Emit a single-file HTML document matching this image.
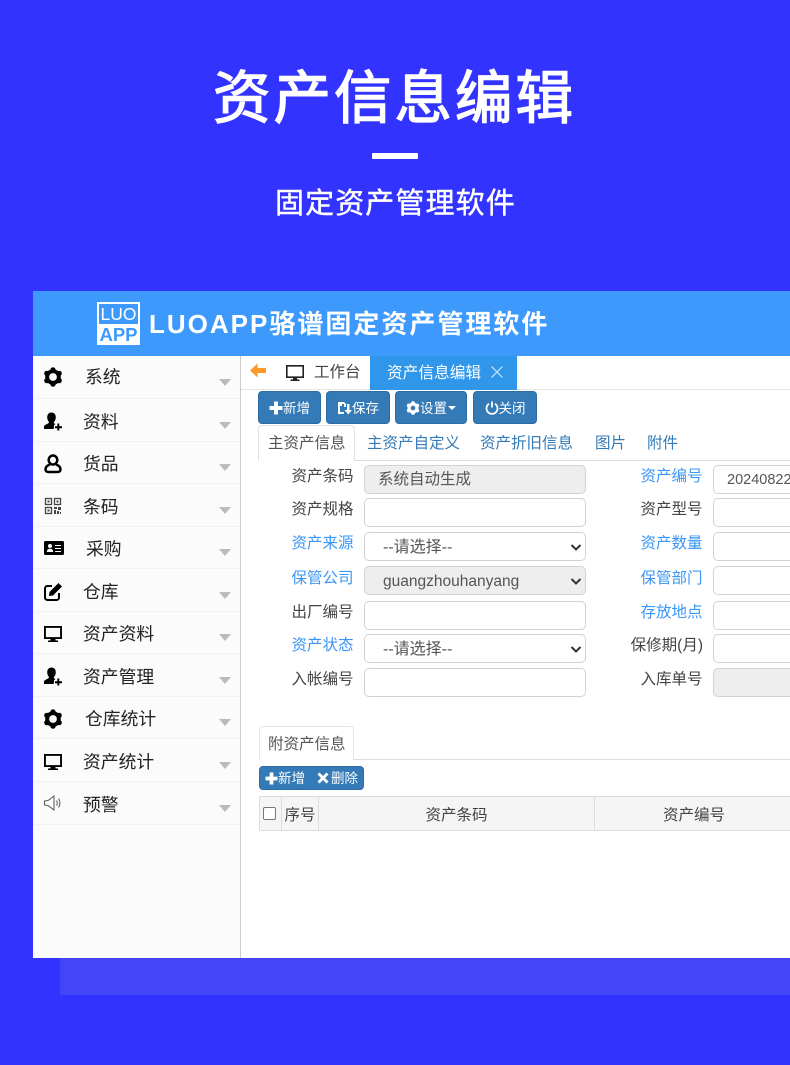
<!DOCTYPE html>
<html lang="zh-CN"><head><meta charset="utf-8"><title>资产信息编辑</title>
<style>
*{box-sizing:border-box;margin:0;padding:0}
html,body{width:790px;height:1065px;overflow:hidden;background:#3333ff}
body{position:relative;font-family:"Liberation Sans","Noto Sans CJK SC",sans-serif;color:#333}
.a,.a *{white-space:nowrap}
.a{position:absolute}
#app{position:absolute;left:33px;top:291px;width:757px;height:667px;background:#fff;overflow:hidden}
#side{position:absolute;left:0;top:65px;width:208px;height:602px;background:#fbfbfb;border-right:1px solid #ccc}
.row{position:absolute;left:0;width:207px;height:43px;border-bottom:1px solid #f3f3f3}
.row span{position:absolute;top:10px;font-size:17.800px;line-height:26px;color:#222}
.row svg{position:absolute;left:10px}
.row i{position:absolute;left:186px;top:23px;border:6.500px solid transparent;border-top:7px solid #bbb;border-bottom:0}
.btn{position:absolute;top:100px;height:33px;background:#337ab7;border:1px solid #2e6da4;border-radius:4px;color:#fff;font-size:13.500px;line-height:31px;display:flex;justify-content:center;align-items:center;padding-top:1px}
.lab{position:absolute;width:69.500px;text-align:right;font-size:15.500px;line-height:22px;color:#444;white-space:nowrap}
.b{color:#3a96f5}
.inp{position:absolute;width:222px;height:29px;background:#fff;border:1px solid #d2d2d2;border-radius:5px;font-size:15.500px;line-height:28px;padding-left:13px;color:#555}
.sel{padding-left:18px;font-size:16px;line-height:29px}
.g{background:#eee}
.inp svg{position:absolute;right:3px;top:10px}
.tab{position:absolute;top:135px;font-size:15.500px;line-height:36px;color:#337ab7}
.th{position:absolute;top:505px;height:35px;background:#f5f5f5;border:1px solid #ddd;border-left:0;font-size:15.500px;line-height:38px;text-align:center;color:#444}
</style></head>
<body>
<div class="a" style="left:213px;top:59px;width:370px;font-size:57.500px;line-height:80px;font-weight:400;color:#fff;letter-spacing:3px;-webkit-text-stroke:1.400px #fff">资产信息编辑</div>
<div class="a" style="left:372px;top:153px;width:46px;height:6px;background:#fff;border-radius:1px"></div>
<div class="a" style="left:275px;top:183px;font-size:29px;line-height:42px;color:#fff;letter-spacing:1.100px;-webkit-text-stroke:.4px #fff">固定资产管理软件</div>
<div class="a" style="left:60px;top:958px;width:730px;height:37px;background:#4444f8"></div>

<svg width="0" height="0" style="position:absolute"><defs>
<g id="gear"><circle cx="10" cy="10" r="7.800" fill="#000"/><g fill="#000"><circle cx="10" cy="2.800" r="2.600"/><circle cx="10" cy="17.200" r="2.600"/><circle cx="3.800" cy="6.400" r="2.600"/><circle cx="16.200" cy="6.400" r="2.600"/><circle cx="3.800" cy="13.600" r="2.600"/><circle cx="16.200" cy="13.600" r="2.600"/></g><circle cx="10" cy="10" r="3.900" fill="#fbfbfb"/></g>
<path id="person" fill="#000" d="M8.500 1.500c2.700 0 4.300 2 4.300 4.800 0 2-.8 3.700-1.900 4.700v1.200l1.600.8-1.500 1.300v2.200l-.5 1.500H1v-2.500c0-1.800 4.700-2.500 5-4.300V11C5 10 4.200 8.300 4.200 6.300c0-2.800 1.600-4.800 4.300-4.800zM14.300 12.500h2v2.700H19v2h-2.700V19.500h-2v-2.300h-2.300v-2h2.300z"/>
<path id="mon" fill="#000" fill-rule="evenodd" d="M1 3h18v13h-6.500v1.500h2.500V19H5v-1.500h2.500V16H1zm1.900 1.900v9.200h14.200V4.900z"/>
</defs></svg>

<div id="app">
 <div class="a" style="left:0;top:0;width:757px;height:65px;background:#3d99fb"></div>
 <div class="a" style="left:64px;top:11px;width:43px;height:43px;background:#fff"></div>
 <div class="a" style="left:66px;top:13px;width:39px;height:20px;background:#3d99fb;color:#fff;font-size:17.500px;line-height:20px;text-align:center">LUO</div>
 <div class="a" style="left:64px;top:33px;width:43px;height:21px;color:#3d99fb;font-size:18.500px;line-height:21px;text-align:center;font-weight:700">APP</div>
 <div class="a" style="left:116px;top:14.500px;font-size:26px;line-height:36px;font-weight:700;color:#fff;letter-spacing:2px">LUOAPP骆谱固定资产管理软件</div>

 <div id="side">
  <div class="row" style="top:0"><svg style="top:11px" width="20" height="20" viewBox="0 0 20 20"><use href="#gear"/></svg><span style="left:52px;top:8px">系统</span><i></i></div>
  <div class="row" style="top:43px"><svg style="top:12px" width="20" height="20" viewBox="0 0 20 20"><use href="#person"/></svg><span style="left:50px">资料</span><i></i></div>
  <div class="row" style="top:85px"><svg style="top:13px;left:11px" width="20" height="20" viewBox="0 0 20 20"><g fill="none" stroke="#000" stroke-width="2.500"><ellipse cx="9" cy="6" rx="4.300" ry="4.500"/><path d="M6 10.500C3 11.500 1.500 13.500 1.500 15.500c0 1.700 1.300 2.500 3 2.500h9c1.700 0 3-.8 3-2.500 0-2-1.500-4-4.500-5"/></g></svg><span style="left:50px">货品</span><i></i></div>
  <div class="row" style="top:128px"><svg style="top:12px;left:11px" width="20" height="20" viewBox="0 0 20 20"><g fill="none" stroke="#444" stroke-width="1.300"><rect x="1.500" y="2.500" width="6" height="6"/><rect x="10.500" y="2.500" width="6" height="6"/><rect x="1.500" y="11.500" width="6" height="6"/></g><path fill="#444" d="M3.500 4.500h2v2h-2zM12.500 4.500h2v2h-2zM3.500 13.500h2v2h-2zM10 11h3v2h-3zM14 11h3v3h-3zM10 14h2v4h-2zM13 15h2v3h-2zM16 16h1v2h-1z"/></svg><span style="left:50px">条码</span><i></i></div>
  <div class="row" style="top:170px"><svg style="top:12px;left:10.500px" width="20" height="20" viewBox="0 0 20 20"><path fill="#000" fill-rule="evenodd" d="M1.500 3h17A1.500 1.500 0 0 1 20 4.500v11a1.500 1.500 0 0 1-1.500 1.500h-17A1.500 1.500 0 0 1 0 15.500v-11A1.500 1.500 0 0 1 1.500 3zM6 6a2 2 0 1 0 0 4 2 2 0 0 0 0-4zm-3.200 8h6.400c0-2-1.200-3.200-3.200-3.200S2.800 12 2.800 14zM11 7v1h6V7zm0 3v1h6v-1zm0 3v1h6v-1z"/></svg><span style="left:53px">采购</span><i></i></div>
  <div class="row" style="top:213px"><svg style="top:13px" width="20" height="20" viewBox="0 0 20 20"><path fill="none" stroke="#000" stroke-width="2" d="M9 4H4.500a2.500 2.500 0 0 0-2.500 2.500v9A2.500 2.500 0 0 0 4.500 18h9a2.500 2.500 0 0 0 2.500-2.500V11"/><path fill="#000" d="M15.500 1l3.500 3.500L10 13.500l-4 .5.500-4z"/></svg><span style="left:50px">仓库</span><i></i></div>
  <div class="row" style="top:255px"><svg style="top:12px" width="20" height="20" viewBox="0 0 20 20"><use href="#mon"/></svg><span style="left:50px">资产资料</span><i></i></div>
  <div class="row" style="top:298px"><svg style="top:12px" width="20" height="20" viewBox="0 0 20 20"><use href="#person"/></svg><span style="left:50px">资产管理</span><i></i></div>
  <div class="row" style="top:340px"><svg style="top:13px" width="20" height="20" viewBox="0 0 20 20"><use href="#gear"/></svg><span style="left:52px">仓库统计</span><i></i></div>
  <div class="row" style="top:383px"><svg style="top:12px" width="20" height="20" viewBox="0 0 20 20"><use href="#mon"/></svg><span style="left:50px">资产统计</span><i></i></div>
  <div class="row" style="top:426px"><svg style="top:11px" width="20" height="20" viewBox="0 0 20 20"><g fill="none" stroke="#555" stroke-width="1"><path d="M1.500 8v4l3.500.5 6 4.500V3L5 7.500z"/><path d="M13.500 7.500c1 1.500 1 3.500 0 5M15.500 5.500c2 3 2 6 0 9"/></g></svg><span style="left:50px">预警</span><i></i></div>
 </div>

 <!-- tabs -->
 <div class="a" style="left:208px;top:65px;width:549px;height:34px;border-bottom:1px solid #e6e6e6"></div>
 <svg class="a" style="left:216px;top:72px" width="18" height="16" viewBox="0 0 18 16"><path fill="#fb9a28" d="M1 7.500L8.500 .5V5H17V10H8.500V14.500z"/></svg>
 <svg class="a" style="left:252px;top:72px" width="20" height="20" viewBox="0 0 20 20"><path fill="#222" fill-rule="evenodd" d="M1 2h18v13h-7v1.500h2.500V18h-9v-1.500H8V15H1zm1.600 1.600v9.800h14.800V3.600z"/></svg>
 <div class="a" style="left:281px;top:69px;font-size:15.500px;line-height:26px;color:#444">工作台</div>
 <div class="a" style="left:337px;top:65px;width:147px;height:34px;background:#2f96ea"></div>
 <div class="a" style="left:354px;top:70px;font-size:15.700px;line-height:26px;color:#fff">资产信息编辑</div>
 <svg class="a" style="left:457px;top:74px" width="14" height="14" viewBox="0 0 14 14"><path stroke="#cfe6fa" stroke-width="1.200" fill="none" d="M1.500 1.500l11 11M12.500 1.500l-11 11"/></svg>

 <!-- buttons -->
 <div class="btn" style="left:225px;width:63px"><svg width="14" height="14" viewBox="0 0 14 14"><path fill="#fff" d="M5 .5h4v4.500h4.500v4H9v4.500H5V9H.5V5H5z"/></svg>新增</div>
 <div class="btn" style="left:293px;width:64px"><svg width="15" height="14" viewBox="0 0 15 14"><path fill="#fff" fill-rule="evenodd" d="M1 1h6l2 2v3H7V3H5v2H3v6h4v2H1zM10 3h2.500v6H15l-3.700 4.500L7.500 9H10z"/></svg>保存</div>
 <div class="btn" style="left:362px;width:72px"><svg width="14" height="14" viewBox="0 0 20 20"><g fill="#fff"><circle cx="10" cy="10" r="7.800"/><circle cx="10" cy="2.800" r="2.600"/><circle cx="10" cy="17.200" r="2.600"/><circle cx="3.800" cy="6.400" r="2.600"/><circle cx="16.200" cy="6.400" r="2.600"/><circle cx="3.800" cy="13.600" r="2.600"/><circle cx="16.200" cy="13.600" r="2.600"/></g><circle cx="10" cy="10" r="3.300" fill="#337ab7"/></svg>设置<span style="display:inline-block;border:4px solid transparent;border-top:4px solid #fff;border-bottom:0;margin-left:1px"></span></div>
 <div class="btn" style="left:440px;width:64px"><svg width="14" height="14" viewBox="0 0 14 14"><path fill="none" stroke="#fff" stroke-width="1.800" d="M4 2.800a5.500 5.500 0 1 0 6 0M7 .5v6"/></svg>关闭</div>

 <!-- subtabs -->
 <div class="a" style="left:225px;top:169px;width:532px;height:1px;background:#ddd"></div>
 <div class="a" style="left:225px;top:134px;width:97px;height:36px;background:#fff;border:1px solid #e2e2e2;border-bottom:0;border-radius:4px 4px 0 0"></div>
 <div class="tab" style="left:235px;color:#555">主资产信息</div>
 <div class="tab" style="left:334px">主资产自定义</div>
 <div class="tab" style="left:447px">资产折旧信息</div>
 <div class="tab" style="left:562px">图片</div>
 <div class="tab" style="left:614px">附件</div>

 <!-- form -->
 <div class="lab" style="left:251px;top:175px">资产条码</div>
 <div class="inp g" style="left:331px;top:174px">系统自动生成</div>
 <div class="lab" style="left:251px;top:208px">资产规格</div>
 <div class="inp" style="left:331px;top:207px"></div>
 <div class="lab b" style="left:251px;top:242px">资产来源</div>
 <div class="inp sel" style="left:331px;top:241px">--请选择--<svg width="12" height="9" viewBox="0 0 12 9"><path fill="none" stroke="#333" stroke-width="2" d="M1.500 2L6 6.500 10.500 2"/></svg></div>
 <div class="lab b" style="left:251px;top:277px">保管公司</div>
 <div class="inp g" style="left:331px;top:275px;padding-left:18px;line-height:29px">guangzhouhanyang<svg width="12" height="9" viewBox="0 0 12 9"><path fill="none" stroke="#333" stroke-width="2" d="M1.500 2L6 6.500 10.500 2"/></svg></div>
 <div class="lab" style="left:251px;top:311px">出厂编号</div>
 <div class="inp" style="left:331px;top:310px"></div>
 <div class="lab b" style="left:251px;top:344px">资产状态</div>
 <div class="inp sel" style="left:331px;top:343px">--请选择--<svg width="12" height="9" viewBox="0 0 12 9"><path fill="none" stroke="#333" stroke-width="2" d="M1.500 2L6 6.500 10.500 2"/></svg></div>
 <div class="lab" style="left:251px;top:378px">入帐编号</div>
 <div class="inp" style="left:331px;top:377px"></div>

 <div class="lab b" style="left:600px;top:175px">资产编号</div>
 <div class="inp" style="left:680px;top:174px;padding-left:13px;font-size:14.500px">20240822</div>
 <div class="lab" style="left:600px;top:208px">资产型号</div>
 <div class="inp" style="left:680px;top:207px"></div>
 <div class="lab b" style="left:600px;top:242px">资产数量</div>
 <div class="inp" style="left:680px;top:241px"></div>
 <div class="lab b" style="left:600px;top:277px">保管部门</div>
 <div class="inp" style="left:680px;top:275px"></div>
 <div class="lab b" style="left:600px;top:311px">存放地点</div>
 <div class="inp" style="left:680px;top:310px"></div>
 <div class="a" style="left:590px;width:80px;text-align:right;top:344px;font-size:15.500px;line-height:22px;color:#444">保修期(月)</div>
 <div class="inp" style="left:680px;top:343px"></div>
 <div class="lab" style="left:600px;top:378px">入库单号</div>
 <div class="inp g" style="left:680px;top:377px"></div>

 <!-- sub section -->
 <div class="a" style="left:226px;top:468px;width:531px;height:1px;background:#ddd"></div>
 <div class="a" style="left:226px;top:435px;width:95px;height:34px;background:#fff;border:1px solid #e5e5e5;border-bottom:0;border-radius:4px 4px 0 0;font-size:15.500px;line-height:35px;padding-left:8px;color:#555">附资产信息</div>
 <div class="a" style="left:226px;top:475px;width:105px;height:24px;background:#337ab7;border:1px solid #2e6da4;border-radius:4px;color:#fff;font-size:13.500px;line-height:23px">
  <svg class="a" style="left:5px;top:5px" width="13" height="13" viewBox="0 0 14 14"><path fill="#fff" d="M5 .5h4v4.500h4.500v4H9v4.500H5V9H.5V5H5z"/></svg>
  <span class="a" style="left:18px;top:0">新增</span>
  <svg class="a" style="left:57px;top:5px" width="12" height="12" viewBox="0 0 12 12"><path fill="#fff" d="M2.500.5L6 4 9.500.5l2 2L8 6l3.500 3.500-2 2L6 8l-3.500 3.500-2-2L4 6 .5 2.500z"/></svg>
  <span class="a" style="left:71px;top:0">删除</span>
 </div>
 <div class="th" style="left:226px;width:23px;border-left:1px solid #ddd"></div>
 <div class="a" style="left:230px;top:516px;width:13px;height:13px;background:#fff;border:1px solid #777;border-radius:2px"></div>
 <div class="th" style="left:249px;width:37px">序号</div>
 <div class="th" style="left:286px;width:276px">资产条码</div>
 <div class="th" style="left:562px;width:195px;border-right:0"><span class="a" style="left:68px;top:0">资产编号</span></div>
</div>
</body></html>
